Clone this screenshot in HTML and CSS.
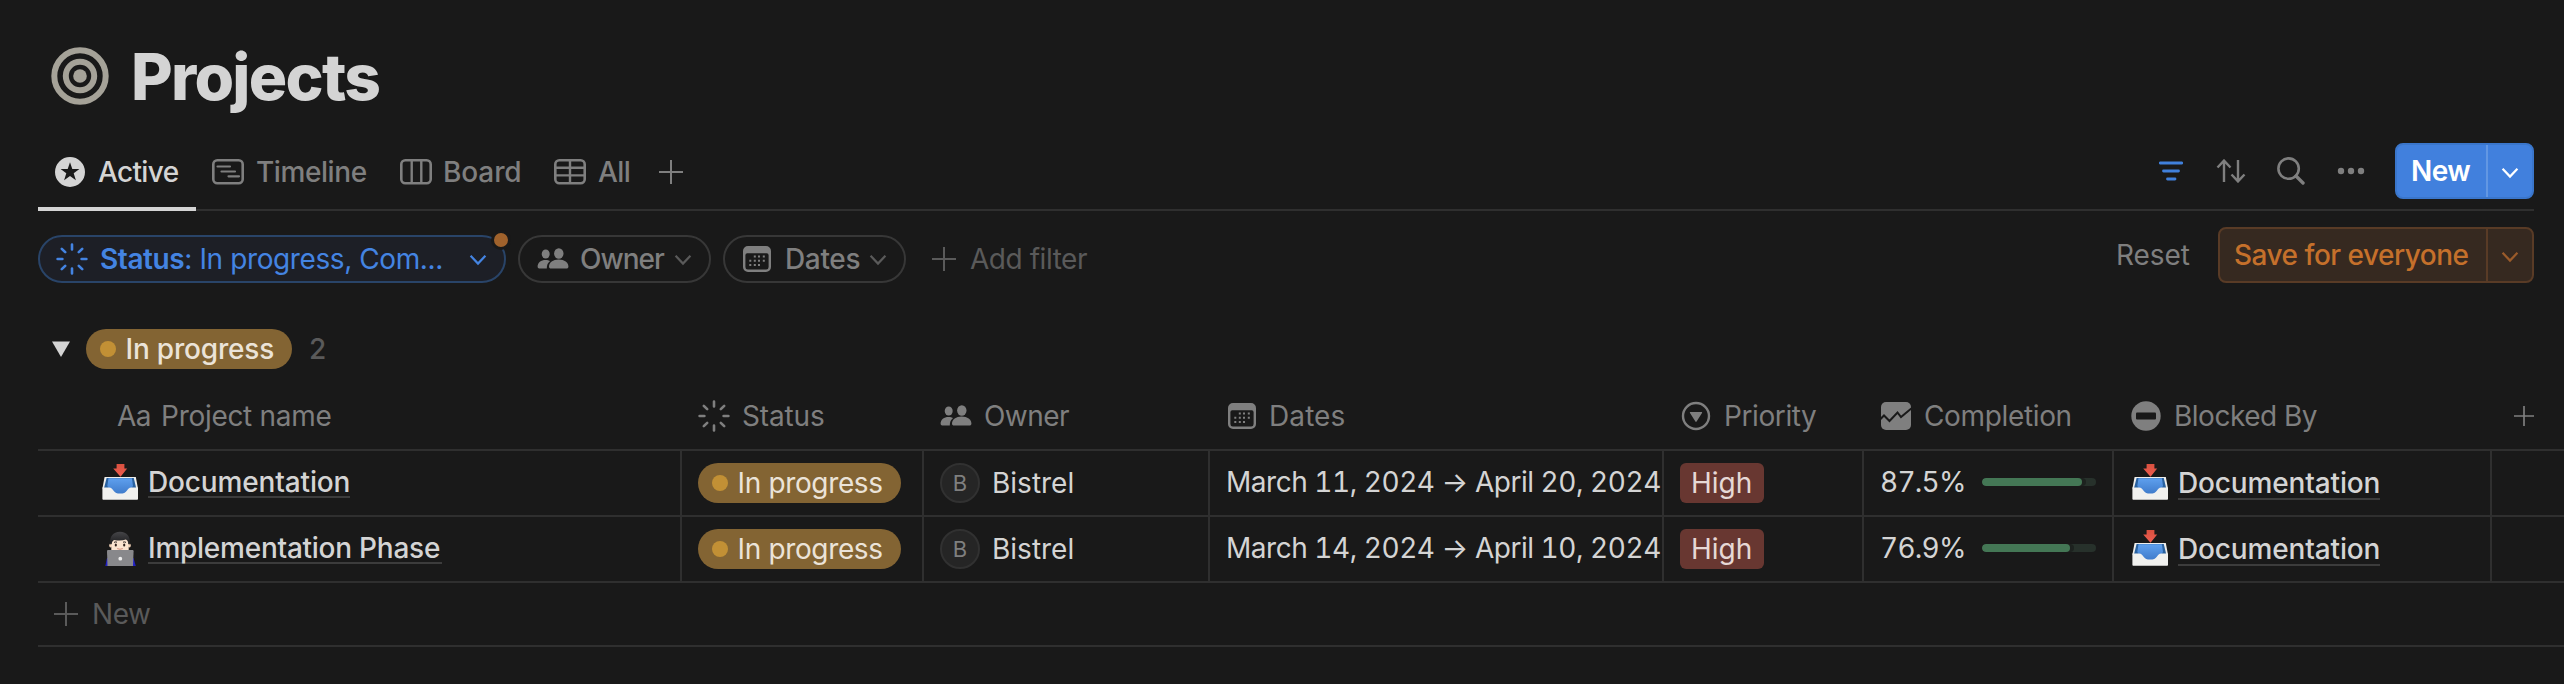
FILE: index.html
```html
<!DOCTYPE html>
<html lang="en">
<head>
<meta charset="utf-8">
<title>Projects</title>
<link rel="stylesheet" href="styles.css">
</head>
<body>
<svg class="defs" width="0" height="0">
  <defs>
    <linearGradient id="trayBlue" x1="0" y1="0" x2="0" y2="1"><stop offset="0" stop-color="#5fa0ee"/><stop offset="1" stop-color="#3f7bcb"/></linearGradient>
    <linearGradient id="trayRed" x1="0" y1="0" x2="0" y2="1"><stop offset="0" stop-color="#d9503f"/><stop offset="1" stop-color="#ee5e52"/></linearGradient>
    <linearGradient id="hair" x1="0" y1="0" x2="0" y2="1"><stop offset="0" stop-color="#454548"/><stop offset="1" stop-color="#1c1c1e"/></linearGradient>
  </defs>
  <symbol id="spinner" viewBox="0 0 32 32"><g stroke="currentColor" stroke-width="2.6" stroke-linecap="round"><path d="M16 1.6v4.8M16 25.6v4.8M1.6 16h4.8M25.6 16h4.8M5.8 5.8l3.4 3.4M22.8 22.8l3.4 3.4M26.2 5.8l-3.4 3.4M9.2 22.8l-3.4 3.4"/></g></symbol>
  <symbol id="people" viewBox="0 0 32 22"><g fill="currentColor"><ellipse cx="8.7" cy="6" rx="4" ry="4.6"/><path d="M.6 18.6C.6 14.6 4 12 8.6 12c1.9 0 3.3.4 4.5 1.1C10.9 14.8 9.7 17.200 9.8 20.6H2.200c-1 0-1.600-.8-1.600-2z"/><ellipse cx="21.8" cy="5.500" rx="4.700" ry="5.200"/><path d="M12 18.500c0-3.800 4-6.900 9.700-6.900s9.700 3.100 9.700 6.900c0 1.400-.8 2.100-2.100 2.100H14.100c-1.300 0-2.100-.7-2.100-2.100z"/></g></symbol>
  <symbol id="calendar" viewBox="0 0 28 26"><path fill="currentColor" fill-rule="evenodd" d="M5 0h18a5 5 0 0 1 5 5v16a5 5 0 0 1-5 5H5a5 5 0 0 1-5-5V5a5 5 0 0 1 5-5zM4.600 7.200A2 2 0 0 0 2.400 9.200V21a2.500 2.500 0 0 0 2.600 2.500h18a2.500 2.500 0 0 0 2.600-2.500V9.200a2 2 0 0 0-2.200-2z"/><g fill="currentColor"><path d="M10.800 9.500h2v2h-2zM15 9.500h2v2h-2zM19.800 9.500h2v2h-2zM6.300 13.700h2v2h-2zM10.800 13.700h2v2h-2zM15 13.700h2v2h-2zM19.800 13.700h2v2h-2zM6.300 18h2v2h-2zM10.800 18h2v2h-2zM15 18h2v2h-2z"/></g></symbol>
  <symbol id="chevron" viewBox="0 0 18 12"><path d="M1.600 1.800L9 9.600l7.400-7.800" fill="none" stroke="currentColor" stroke-width="2.200"/></symbol>
  <symbol id="plus" viewBox="0 0 24 24"><path d="M12 0v24M0 12h24" stroke="currentColor" stroke-width="2"/></symbol>
  <symbol id="tray" viewBox="0 0 36 36"><path d="M14.600 0h7.800v4.500h2.800L18.500 12.700 11.200 4.500h3.400z" fill="url(#trayRed)"/><path d="M2.600 13h31.200L36 24.500H.4z" fill="#eeeeec"/><path d="M4.600 14h27.200l2.400 10.200H2z" fill="#29619f"/><path d="M6.500 14.200h23.400L31 22l-2.700 4-5 4H13l-5-4-2.700-4z" fill="url(#trayBlue)"/><path d="M.4 23.400H7c2.500 0 3.200 1.400 4.600 3.300 1.500 2 3.200 2.900 6.600 2.900s5.100-.9 6.600-2.900c1.400-1.900 2.100-3.300 4.600-3.300H36v11.300c0 .6-.5 1-1 1H1.400c-.5 0-1-.4-1-1z" fill="#f1f1ef"/></symbol>
  <symbol id="person" viewBox="0 0 36 36"><path d="M3.300 36l1.700-8h26.500l2.300 8z" fill="#2020c4"/><ellipse cx="8.600" cy="15.400" rx="1.400" ry="2" fill="#f0d0b5"/><ellipse cx="27.400" cy="15.400" rx="1.400" ry="2" fill="#f0d0b5"/><path d="M9.300 8h17.400v12.500H9.300z" fill="#fae3cf"/><path d="M8.300 14.500C7.200 6.500 11 1.700 18 1.700S28.800 6.500 27.700 14.500l-1.400-.5c0-2.300-.7-3.400-2.400-4.500-3.300 1.100-7.800 1.200-11.800.4-1.600 1-2.300 2.200-2.400 4.100z" fill="url(#hair)"/><path d="M12 12.400q1.500-.9 3-.2M21 12.200q1.500-.7 3 .2" stroke="#2b2320" stroke-width="1" fill="none"/><ellipse cx="13.800" cy="14.900" rx="1.100" ry="1.500" fill="#2e211c"/><ellipse cx="22.200" cy="14.900" rx="1.100" ry="1.500" fill="#2e211c"/><path d="M15.200 18.600q2.800 1.300 5.600 0" stroke="#c98374" stroke-width=".9" fill="none"/><path d="M6.300 20h24c.8 0 1.300.5 1.300 1.200L31 36H5.500L5 21.200C5 20.500 5.500 20 6.300 20z" fill="#88888b"/><circle cx="18.300" cy="28.700" r="1.900" fill="#ececec"/></symbol>
</svg>

<main class="page">
  <header class="title">
    <svg class="target" viewBox="0 0 58 58"><g fill="none" stroke="#a5a298" stroke-width="6"><circle cx="29" cy="29" r="25.700"/><circle cx="29" cy="29" r="14.200"/></g><circle cx="29" cy="29" r="6.800" fill="#a5a298"/></svg>
    <h1>Projects</h1>
  </header>

  <nav class="tabs">
    <a class="tab active"><svg class="i30" viewBox="0 0 30 30"><path fill="currentColor" fill-rule="evenodd" d="M15 0a15 15 0 1 1 0 30 15 15 0 0 1 0-30zM15 5.200l-2.300 6.900H5.600l5.700 4.200-2.200 6.900 5.900-4.200 5.900 4.200-2.200-6.900 5.700-4.200h-7.100z"/></svg><span class="t-active">Active</span></a>
    <a class="tab tab-timeline"><svg class="view" viewBox="0 0 32 26"><rect x="1.300" y="1.300" width="29.400" height="23" rx="4" fill="none" stroke="currentColor" stroke-width="2.600"/><path d="M5.500 7.500h12.500M9.500 12.500h13.500M16.500 17.300h10.500" stroke="currentColor" stroke-width="2.200" stroke-linecap="round"/></svg><span class="t-timeline">Timeline</span></a>
    <a class="tab tab-board"><svg class="view" viewBox="0 0 32 26"><path d="M11.700 1.500v23M21.300 1.500v23" stroke="currentColor" stroke-width="2.400"/><rect x="1.300" y="1.300" width="29.400" height="23" rx="4" fill="none" stroke="currentColor" stroke-width="2.600"/></svg><span>Board</span></a>
    <a class="tab tab-all"><svg class="view" viewBox="0 0 32 26"><path d="M16 1.500v23M1.500 8.800h29M1.500 16.400h29" stroke="currentColor" stroke-width="2.400"/><rect x="1.300" y="1.300" width="29.400" height="23" rx="4" fill="none" stroke="currentColor" stroke-width="2.600"/></svg><span class="t-all">All</span></a>
    <svg class="i24"><use href="#plus"/></svg>
    <div class="tools">
      <svg class="tool-filter" viewBox="0 0 24 24"><path d="M1.200 4h21.600M4.500 12h15M8.500 20h7.500" stroke="currentColor" stroke-width="2.800" stroke-linecap="round"/></svg>
      <svg class="tool-sort" viewBox="0 0 30 24"><path d="M8 23V2M1.500 8.500L8 1.600l6.500 6.900M22 1v21M15.500 15.500L22 22.400l6.500-6.900" fill="none" stroke="currentColor" stroke-width="2.400"/></svg>
      <svg class="tool-search" viewBox="0 0 28 28"><circle cx="11.600" cy="11.600" r="10.200" fill="none" stroke="currentColor" stroke-width="2.600"/><path d="M19 19l7 7" stroke="currentColor" stroke-width="3.400" stroke-linecap="round"/></svg>
      <svg class="tool-more" viewBox="0 0 28 8"><g fill="currentColor"><circle cx="4" cy="4" r="3.200"/><circle cx="14" cy="4" r="3.200"/><circle cx="24" cy="4" r="3.200"/></g></svg>
      <button class="btn new"><span class="main">New</span><span class="drop"><svg class="chev"><use href="#chevron"/></svg></span></button>
    </div>
  </nav>

  <section class="filters">
    <div class="pill status-filter"><svg class="i32"><use href="#spinner"/></svg><span class="t-filter"><b>Status</b>: In progress, Com...</span><svg class="chev"><use href="#chevron"/></svg><i class="unsaved"></i></div>
    <div class="pill owner-filter"><svg class="people"><use href="#people"/></svg><span class="t-owner">Owner</span><svg class="chev"><use href="#chevron"/></svg></div>
    <div class="pill dates-filter"><svg class="cal"><use href="#calendar"/></svg><span class="t-dates">Dates</span><svg class="chev"><use href="#chevron"/></svg></div>
    <div class="add-filter"><svg class="i24"><use href="#plus"/></svg><span class="t-add">Add filter</span></div>
    <div class="save-area">
      <span class="reset">Reset</span>
      <button class="btn save"><span class="main">Save for everyone</span><span class="drop"><svg class="chev"><use href="#chevron"/></svg></span></button>
    </div>
  </section>

  <section class="group">
    <svg class="tri" viewBox="0 0 18 16"><path d="M0 .5h18L9 16z" fill="#d4d4d4"/></svg>
    <span class="tag big"><i></i><span>In progress</span></span>
    <span class="count">2</span>
  </section>

  <section class="table">
    <div class="row head">
      <div class="cell"><span class="t-aa">Aa</span><span class="t-pname">Project name</span></div>
      <div class="cell"><svg class="i32"><use href="#spinner"/></svg><span class="t-status">Status</span></div>
      <div class="cell"><svg class="people"><use href="#people"/></svg><span class="t-howner">Owner</span></div>
      <div class="cell"><svg class="cal"><use href="#calendar"/></svg><span class="t-hdates">Dates</span></div>
      <div class="cell"><svg class="i30 prio" viewBox="0 0 30 30"><circle cx="15" cy="15" r="13" fill="none" stroke="currentColor" stroke-width="2.400"/><path d="M9.500 11h11c.6 0 .8.500.5 1l-5.400 8.600c-.3.500-.9.500-1.200 0L9 12c-.3-.5-.1-1 .5-1z" fill="currentColor"/></svg><span class="t-priority">Priority</span></div>
      <div class="cell"><svg class="comp" viewBox="0 0 30 28"><rect width="30" height="28" rx="5" fill="currentColor"/><path d="M-1 17.500l4-4L8.500 19l8-8.500 3.500 4.500L31 6" fill="none" stroke="#191919" stroke-width="2"/></svg><span class="t-completion">Completion</span></div>
      <div class="cell"><svg class="i30 block" viewBox="0 0 30 30"><circle cx="15" cy="15" r="14.700" fill="currentColor"/><rect x="5" y="11.500" width="20" height="7" rx="1" fill="#191919"/></svg><span class="t-blocked">Blocked By</span></div>
      <div class="cell"><svg class="i20"><use href="#plus"/></svg></div>
    </div>
    <div class="row">
      <div class="cell name"><svg class="emoji"><use href="#tray"/></svg><span class="link t-doc">Documentation</span></div>
      <div class="cell"><span class="tag"><i></i><span>In progress</span></span></div>
      <div class="cell"><span class="avatar">B</span><span>Bistrel</span></div>
      <div class="cell dates"><span>March 11, 2024 → April 20, 2024</span></div>
      <div class="cell"><span class="high">High</span></div>
      <div class="cell pct"><span class="t-pct">87.5%</span><span class="bar"><i style="width:87.5%"></i></span></div>
      <div class="cell blocked"><svg class="emoji"><use href="#tray"/></svg><span class="link t-doc">Documentation</span></div>
      <div class="cell"></div>
    </div>
    <div class="row">
      <div class="cell name"><svg class="emoji"><use href="#person"/></svg><span class="link t-impl">Implementation Phase</span></div>
      <div class="cell"><span class="tag"><i></i><span>In progress</span></span></div>
      <div class="cell"><span class="avatar">B</span><span>Bistrel</span></div>
      <div class="cell dates"><span>March 14, 2024 → April 10, 2024</span></div>
      <div class="cell"><span class="high">High</span></div>
      <div class="cell pct"><span class="t-pct">76.9%</span><span class="bar"><i style="width:76.9%"></i></span></div>
      <div class="cell blocked"><svg class="emoji"><use href="#tray"/></svg><span class="link t-doc">Documentation</span></div>
      <div class="cell"></div>
    </div>
    <div class="new-row"><svg class="i24"><use href="#plus"/></svg><span class="t-newrow">New</span></div>
  </section>
</main>
</body>
</html>
```
FILE: styles.css
```css
* { box-sizing: border-box; }
body { margin: 0; background: #191919; color: #d4d4d4; font-family: Inter, "Liberation Sans", sans-serif; font-size: 28px; font-weight: 430; line-height: 40px; overflow: hidden; }
svg { display: block; flex: none; }
.defs { position: absolute; }
span { white-space: nowrap; }
.page { height: 684px; padding-left: 38px; }
.i20 { width: 20px; height: 20px; }
.i24 { width: 24px; height: 24px; }
.i30 { width: 30px; height: 30px; }
.i32 { width: 32px; height: 32px; }
.view { width: 32px; height: 26px; margin-top: 1px; }
.people { width: 32px; height: 22px; }
.cal { width: 28px; height: 26px; }
.chev { width: 18px; height: 12px; }

.title { display: flex; align-items: center; height: 134px; padding: 20px 0 2px 13px; }
.target { width: 58px; height: 58px; }
h1 { margin: 2px 0 0 22px; font-size: 64px; line-height: 76px; font-weight: 760; letter-spacing: -1.7px; }

.tabs { display: flex; align-items: center; width: 2496px; height: 77px; border-bottom: 2px solid #2f2f2f; color: #7f7f7f; font-weight: 540; }
.tab { display: flex; align-items: center; height: 75px; }
.tab.active { width: 158px; height: 77px; margin-bottom: -2px; padding-left: 17px; padding-top: 2px; gap: 13px; color: #d4d4d4; border-bottom: 4px solid #d4d4d4; }
.tab-timeline { gap: 12px; margin-left: 16px; width: 188px; }
.tab-board { gap: 11px; width: 154px; letter-spacing: -.1px; }
.tab-all { gap: 12px; width: 105px; }
.t-active { letter-spacing: -.65px; }
.t-timeline { letter-spacing: -.42px; }
.t-all { letter-spacing: -.6px; }
.tools { display: flex; align-items: center; margin-left: auto; padding-bottom: 1px; }
.tool-filter { width: 24px; height: 24px; color: #4080dc; margin-right: 33px; }
.tool-sort { width: 30px; height: 24px; margin-right: 31px; }
.tool-search { width: 28px; height: 28px; margin-right: 32px; }
.tool-more { width: 28px; height: 8px; margin-right: 30px; }

.btn { display: flex; height: 56px; padding: 0; border: 2px solid; border-radius: 8px; font: inherit; }
.btn .main { display: flex; flex: none; align-items: center; height: 100%; padding-left: 14px; }
.btn .drop { display: flex; flex: none; align-items: center; justify-content: center; width: 46px; height: 100%; border-left: 2px solid; padding-top: 3px; }
.new { width: 139px; color: #fff; background: #4180dd; border-color: #3a76cb; font-weight: 600; letter-spacing: -.6px; }
.new .main { width: 89px; }
.new .drop { border-left-color: #6297e3; }
.save { width: 316px; font-weight: 540; letter-spacing: -.5px; color: #c5702b; background: #362920; border-color: #593b26; }
.save .main { width: 266px; }
.save .drop { border-left-color: #593b26; color: #9b5b2a; }

.filters { display: flex; width: 2496px; height: 72px; margin-top: 16px; align-items: flex-start; color: #7f7f7f; }
.pill { position: relative; display: flex; align-items: center; height: 48px; margin-top: 8px; border: 2px solid #373737; border-radius: 24px; font-weight: 500; }
.pill .chev { margin-left: auto; margin-top: 1px; color: #5a5a5a; }
.status-filter { width: 468px; padding: 0 17px 0 16px; color: #4484e2; background: #1d1f26; border-color: #294468; font-weight: 430; }
.status-filter b { font-weight: 560; }
.status-filter .chev { color: #4484e2; }
.t-filter { margin-left: 12px; letter-spacing: -.4px; }
.unsaved { position: absolute; top: -7px; right: -7px; width: 20px; height: 20px; border: 3px solid #191919; border-radius: 50%; background: #a0622c; }
.owner-filter { width: 193px; margin-left: 12px; padding: 0 17px; }
.t-owner { margin-left: 11px; letter-spacing: -1px; }
.dates-filter { width: 183px; margin-left: 12px; padding: 0 17px 0 18px; }
.t-dates { margin-left: 14px; letter-spacing: -.35px; }
.add-filter { display: flex; align-items: center; gap: 14px; height: 48px; margin: 8px 0 0 26px; color: #5a5a5a; }
.t-add { letter-spacing: -.45px; }
.save-area { display: flex; align-items: center; margin-left: auto; }
.reset { width: 102px; color: #7f7f7f; letter-spacing: -.1px; }

.group { display: flex; align-items: center; height: 40px; margin-top: 30px; padding-left: 14px; }
.tri { width: 18px; height: 16px; margin-right: 16px; }
.tag { display: flex; align-items: center; width: 203px; height: 40px; padding-left: 14px; gap: 9.5px; border-radius: 20px; background: #836433; color: #ebe3d8; letter-spacing: -.35px; }
.tag i { width: 16px; height: 16px; border-radius: 50%; background: #c29035; }
.tag.big { width: 206px; font-weight: 550; letter-spacing: -.2px; }
.count { margin-left: 17px; color: #5a5a5a; font-weight: 500; }

.table { margin-top: 14px; }
.row { display: grid; grid-template-columns: 644px 242px 286px 454px 200px 250px 378px 72px; height: 66px; border-bottom: 2px solid #2f2f2f; }
.cell { display: flex; align-items: center; padding-left: 16px; border-right: 2px solid #2f2f2f; min-width: 0; }
.cell:last-child { border-right: 0; }
.head { height: 68px; color: #7f7f7f; }
.head .cell { border-color: transparent; gap: 13px; }
.head .cell:nth-child(2), .head .cell:nth-child(3) { gap: 12px; }
.head .cell:first-child { padding-left: 79px; gap: 10px; }
.head .cell:last-child { padding-left: 22px; }
.head .cal { margin-left: 2px; }
.prio, .comp, .block { margin-left: 1px; }
.comp { width: 30px; height: 28px; }
.t-aa { letter-spacing: -.5px; }
.t-pname { letter-spacing: -.3px; }
.t-status { letter-spacing: -.15px; }
.t-howner { letter-spacing: -.55px; }
.t-hdates { letter-spacing: .1px; }
.t-priority { letter-spacing: -.4px; }
.t-completion { letter-spacing: -.35px; }
.t-blocked { letter-spacing: -.5px; }
.name { padding-left: 64px; gap: 10px; }
.emoji { width: 36px; height: 36px; margin-top: -2px; }
.link { font-weight: 540; line-height: 34px; border-bottom: 2px solid #3c3c3c; }
.t-doc { width: 202px; letter-spacing: -.15px; }
.t-impl { width: 294px; letter-spacing: -.25px; }
.name .link { height: 33px; margin-top: -3px; }
.blocked { padding-left: 18px; gap: 10px; }
.blocked .link { height: 34px; }
.avatar { width: 40px; height: 40px; margin-right: 12px; border: 2px solid #313131; border-radius: 50%; background: #252525; color: #7f7f7f; font-size: 22px; line-height: 36px; text-align: center; }
.dates, .pct { padding-bottom: 2px; font-variant-numeric: tabular-nums; }
.dates { letter-spacing: -.47px; }
.t-pct { letter-spacing: -.75px; }
.high { width: 84px; height: 40px; padding-left: 11px; border-radius: 6px; background: #683731; color: #e6d8d5; }
.pct { justify-content: space-between; padding-right: 16px; }
.bar { width: 114px; height: 8px; border-radius: 4px; background: #27312b; overflow: hidden; }
.bar i { display: block; height: 8px; border-radius: 4px; background: #447755; box-shadow: 4px 0 0 #1d221f; }
.new-row { display: flex; align-items: center; height: 64px; padding-left: 16px; gap: 14px; border-bottom: 2px solid #2f2f2f; color: #5a5a5a; }
.t-newrow { letter-spacing: -.4px; }
```
